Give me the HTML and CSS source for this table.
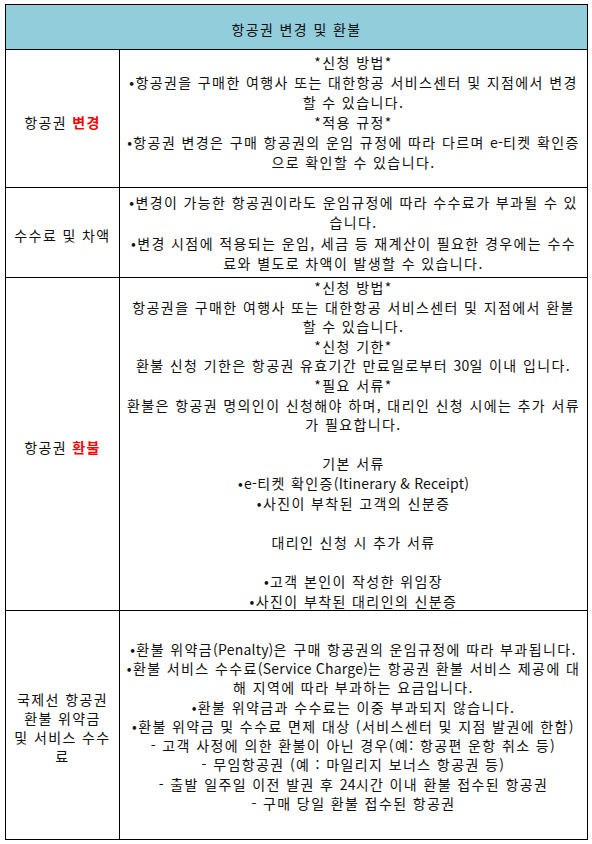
FILE: index.html
```html
<!DOCTYPE html>
<html lang="ko">
<head>
<meta charset="utf-8">
<title>항공권 변경 및 환불</title>
<link rel="stylesheet" href="styles.css">
</head>
<body>
<div class="sheet">
  <div class="head">항공권 변경 및 환불</div>

  <div class="row r1">
    <div class="label l1">항공권&nbsp;<b class="hl">변경</b></div>
    <div class="body b1">
      <p>*신청 방법*</p>
      <p>•항공권을 구매한 여행사 또는 대한항공 서비스센터 및 지점에서 변경</p>
      <p>할 수 있습니다.</p>
      <p>*적용 규정*</p>
      <p>•항공권 변경은 구매 항공권의 운임 규정에 따라 다르며 <span class="lat">e-</span>티켓 확인증</p>
      <p>으로 확인할 수 있습니다.</p>
    </div>
  </div>

  <div class="row r2">
    <div class="label l2">수수료 및 차액</div>
    <div class="body b2">
      <p>•변경이 가능한 항공권이라도 운임규정에 따라 수수료가 부과될 수 있</p>
      <p>습니다.</p>
      <p>•변경 시점에 적용되는 운임, 세금 등 재계산이 필요한 경우에는 수수</p>
      <p>료와 별도로 차액이 발생할 수 있습니다.</p>
    </div>
  </div>

  <div class="row r3">
    <div class="label l3">항공권&nbsp;<b class="hl">환불</b></div>
    <div class="body b3">
      <p>*신청 방법*</p>
      <p>항공권을 구매한 여행사 또는 대한항공 서비스센터 및 지점에서 환불</p>
      <p>할 수 있습니다.</p>
      <p>*신청 기한*</p>
      <p>환불 신청 기한은 항공권 유효기간 만료일로부터 <span class="lat">30</span>일 이내 입니다.</p>
      <p>*필요 서류*</p>
      <p>환불은 항공권 명의인이 신청해야 하며, 대리인 신청 시에는 추가 서류</p>
      <p>가 필요합니다.</p>
      <p>&nbsp;</p>
      <p>기본 서류</p>
      <p>•<span class="lat">e-</span>티켓 확인증<span class="lat">(Itinerary &amp; Receipt)</span></p>
      <p>•사진이 부착된 고객의 신분증</p>
      <p>&nbsp;</p>
      <p>대리인 신청 시 추가 서류</p>
      <p>&nbsp;</p>
      <p>•고객 본인이 작성한 위임장</p>
      <p>•사진이 부착된 대리인의 신분증</p>
    </div>
  </div>

  <div class="row r4">
    <div class="label l4">
      <p>국제선 항공권</p>
      <p>환불 위약금</p>
      <p>및 서비스 수수</p>
      <p>료</p>
    </div>
    <div class="body b4">
      <p>•환불 위약금<span class="lat">(Penalty)</span>은 구매 항공권의 운임규정에 따라 부과됩니다.</p>
      <p>•환불 서비스 수수료<span class="lat">(Service Charge)</span>는 항공권 환불 서비스 제공에 대</p>
      <p>해 지역에 따라 부과하는 요금입니다.</p>
      <p>•환불 위약금과 수수료는 이중 부과되지 않습니다.</p>
      <p>•환불 위약금 및 수수료 면제 대상 (서비스센터 및 지점 발권에 한함)</p>
      <p>- 고객 사정에 의한 환불이 아닌 경우(예: 항공편 운항 취소 등)</p>
      <p>- 무임항공권 (예 : 마일리지 보너스 항공권 등)</p>
      <p>- 출발 일주일 이전 발권 후 <span class="lat">24</span>시간 이내 환불 접수된 항공권</p>
      <p>- 구매 당일 환불 접수된 항공권</p>
    </div>
  </div>
</div>
</body>
</html>
```
FILE: styles.css
```css
* { box-sizing: border-box; }
html, body { margin: 0; padding: 0; background: #fff; }
body {
  font-family: "Noto Sans CJK KR", "Noto Sans", sans-serif;
  font-size: 14px;
  letter-spacing: 1.4px;
  color: #111;
  padding: 4px 0 0 5px;
}
p { margin: 0; white-space: nowrap; }
.lat { letter-spacing: 0.2px; }
.sheet {
  width: 583px;
  height: 836px;
  border: 1px solid #000;
  display: flex;
  flex-direction: column;
}
.head {
  height: 44px;
  flex: none;
  background: #92cddc;
  display: flex;
  align-items: center;
  justify-content: center;
  padding-top: 4px;
}
.row {
  flex: none;
  display: grid;
  grid-template-columns: 113px 1fr;
  grid-template-rows: minmax(0, 1fr);
  border-top: 1px solid #000;
}
.r1 { height: 138px; }
.r2 { height: 90px; }
.r3 { height: 333px; }
.r4 { height: 229px; }
.label, .body {
  min-height: 0;
  display: flex;
  flex-direction: column;
  align-items: center;
  justify-content: center;
  text-align: center;
}
.body { border-left: 1px solid #000; }
.hl { color: #f00; font-weight: bold; }
.l1 { flex-direction: row; padding-top: 7px; }
.l3 { flex-direction: row; padding-top: 6px; }
.l2 { padding-top: 5px; }
.b1 { line-height: 20px; padding-bottom: 13px; }
.b2 { line-height: 20.5px; }
.b3 { line-height: 19.6px; justify-content: flex-start; }
.b4 { line-height: 19.3px; padding-top: 3px; }
.l4 { line-height: 19px; padding-top: 6px; }
```
